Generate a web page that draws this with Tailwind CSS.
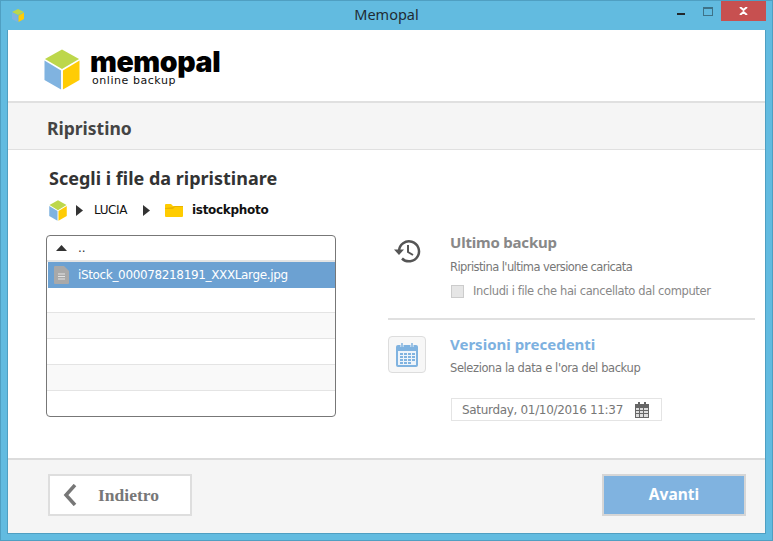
<!DOCTYPE html>
<html lang="en">
<head>
    <meta charset="UTF-8">
    <title>Memopal</title>
    <script src="https://cdn.jsdelivr.net/npm/@tailwindcss/browser@4"></script>
</head>
<body class="w-[773px] h-[541px] overflow-hidden font-['DejaVu_Sans',sans-serif]">

    <div class="w-[773px] h-[541px] flex flex-col bg-[#62bbe0] border border-[#4f9fc2] px-[6px] pb-[6px]">

        <!-- title bar -->
        <div class="h-[29px] shrink-0 flex items-center relative">
            <svg class="ml-[4px] mb-[1px]" width="14" height="15" viewBox="0 0 14 15">
                <path d="M7 1l6 3-6 3-6-3z" fill="#bdd74b"/>
                <path d="M1 4.500l5.500 3V14L1 11z" fill="#80b3e0"/>
                <path d="M13 4.500l-5.500 3V14l5.500-3z" fill="#ffcc05"/>
            </svg>
            <span class="flex-1 text-center text-[14.500px] text-[#1f2b33] font-['Noto_Sans',sans-serif] pr-[18px] mt-[-1px]">Memopal</span>
            <div class="absolute left-[670px] top-[12px] w-[8px] h-[2px] bg-[#22282c]"></div>
            <div class="absolute left-[696px] top-[6px] w-[10px] h-[9px] border border-[#3e7288] border-t-2"></div>
            <div class="absolute left-[714px] top-0 w-[45px] h-[20px] bg-[#c75050] flex items-center justify-center">
                <svg width="9" height="8" viewBox="0 0 9 8"><path d="M1 0l3.500 3L8 0M1 8l3.500-3L8 8" stroke="#fff" stroke-width="2" fill="none"/></svg>
            </div>
        </div>

        <!-- window body -->
        <div class="flex-1 flex flex-col bg-white border border-[#4f9fc2] border-t-0 min-h-0">

            <!-- logo -->
            <div class="h-[71px] shrink-0 flex items-center pl-[36px] border-b-2 border-[#e0e0e0] box-content">
                <svg class="mt-[7px]" width="36" height="41" viewBox="0 0 38 41" preserveAspectRatio="none">
                    <path d="M19 0.500L37 10 19 20 1 10z" fill="#bdd74b"/>
                    <path d="M0.500 11.500L18 21.500V40.500L0.500 31z" fill="#80b3e0"/>
                    <path d="M37.500 11.500L20 21.500V40.500L37.500 31z" fill="#ffcc05"/>
                </svg>
                <div class="ml-[10px] flex flex-col mt-[3px]">
                    <span class="text-[28.500px] leading-[26px] font-black tracking-[-0.4px] text-black font-['Inter',sans-serif]">memopal</span>
                    <span class="ml-[2px] text-[11px] leading-[11px] tracking-[0.55px] text-[#111]">online backup</span>
                </div>
            </div>

            <!-- section band -->
            <div class="h-[47px] shrink-0 flex items-center pl-[39px] pt-[5px] bg-[#f5f5f5] border-b border-[#e0e0e0] box-border">
                <span class="text-[17.500px] font-bold text-[#444] font-['Noto_Sans',sans-serif]">Ripristino</span>
            </div>

            <!-- main -->
            <div class="flex-1 flex min-h-0">
                <div class="w-[380px] shrink-0 pl-[38px] flex flex-col">
                    <h1 class="ml-[3px] mt-[17px] text-[18px] leading-[22px] font-bold text-[#333] font-['Noto_Sans',sans-serif]">Scegli i file da ripristinare</h1>
                    <div class="ml-[3px] mt-[11px] h-[20px] flex items-center text-[12px] text-[#111]">
                        <svg width="18" height="21" viewBox="0 0 38 41" preserveAspectRatio="none">
                            <path d="M19 0.500L37 10 19 20 1 10z" fill="#bdd74b"/>
                            <path d="M0.500 11.500L18 21.500V40.500L0.500 31z" fill="#80b3e0"/>
                            <path d="M37.500 11.500L20 21.500V40.500L37.500 31z" fill="#ffcc05"/>
                        </svg>
                        <svg class="ml-[9px]" width="7" height="11" viewBox="0 0 7 11"><path d="M0 0l7 5.500L0 11z" fill="#333"/></svg>
                        <span class="ml-[11px] tracking-[-0.4px]">LUCIA</span>
                        <svg class="ml-[16px]" width="7" height="11" viewBox="0 0 7 11"><path d="M0 0l7 5.500L0 11z" fill="#333"/></svg>
                        <svg class="ml-[15px]" width="18" height="14" viewBox="0 0 18 14"><path d="M0 2q0-1 1-1h5l2 2h9q1 0 1 1v9q0 1-1 1H1q-1 0-1-1z" fill="#fc0"/><path d="M0 5l8-1 2-1H18V4H10L8 6H0z" fill="#e9b400"/></svg>
                        <span class="ml-[9px] font-bold tracking-[-0.3px]">istockphoto</span>
                    </div>

                    <!-- file list -->
                    <div class="mt-[15px] w-[290px] h-[182px] border border-[#777] rounded-[4px] overflow-hidden flex flex-col text-[12px]">
                        <div class="h-[24px] flex items-center pl-[9px] border-b-2 border-[#e4e4e4] box-content">
                            <svg width="11" height="6" viewBox="0 0 11 6"><path d="M5.500 0L11 6H0z" fill="#333"/></svg>
                            <span class="ml-[11px] text-[#333]">..</span>
                        </div>
                        <div class="h-[25px] ml-px flex items-center pl-[6px] bg-[#6ca1d2] text-white border-b border-[#6ca1d2] box-content">
                            <svg width="15" height="18" viewBox="0 0 15 18"><path d="M0 1q0-1 1-1h9l5 5v12q0 1-1 1H1q-1 0-1-1z" fill="#a9a9a9"/><path d="M4 8h7M4 10.500h7M4 13h7" stroke="#e4e4e4"/></svg>
                            <span class="ml-[9px] tracking-[-0.35px]">iStock_000078218191_XXXLarge.jpg</span>
                        </div>
                        <div class="h-[24px] border-b border-[#e4e4e4] box-content"></div>
                        <div class="h-[25px] bg-[#f9f9f9] border-b border-[#e4e4e4] box-content"></div>
                        <div class="h-[25px] border-b border-[#e4e4e4] box-content"></div>
                        <div class="h-[25px] bg-[#f9f9f9] border-b border-[#e4e4e4] box-content"></div>
                        <div class="flex-1"></div>
                    </div>
                </div>

                <div class="w-[367px] shrink-0 flex flex-col">
                    <!-- last backup -->
                    <div class="h-[168px] border-b-2 border-[#e0e0e0] flex box-content">
                        <svg class="ml-[5px] mt-[88px]" width="28" height="26" viewBox="0 0 28 26" fill="none">
                            <path d="M6 13a10 10 0 1 1 3 7.500" stroke="#555" stroke-width="2.500"/>
                            <path d="M1 11.500h10L6 17z" fill="#555"/>
                            <path d="M15 7v7l5 3" stroke="#555" stroke-width="2"/>
                        </svg>
                        <div class="ml-[29px] flex flex-col">
                            <span class="mt-[83px] text-[15px] leading-[18px] font-bold tracking-[-0.2px] text-[#888] font-['Noto_Sans',sans-serif]">Ultimo backup</span>
                            <span class="mt-[9px] text-[11.500px] leading-[14px] tracking-[-0.58px] text-[#777]">Ripristina l'ultima versione caricata</span>
                            <label class="mt-[10px] flex items-center text-[11.500px] leading-[14px] tracking-[-0.37px] text-[#888]">
                                <span class="ml-px w-[13px] h-[13px] bg-[#e6e6e6] border border-[#ccc]"></span>
                                <span class="ml-[9px]">Includi i file che hai cancellato dal computer</span>
                            </label>
                        </div>
                    </div>

                    <!-- previous versions -->
                    <div class="flex">
                        <div class="mt-[16px] w-[38px] h-[37px] rounded-[4px] bg-[#f7f7f7] border border-[#ddd] flex items-center justify-center">
                            <svg width="22" height="24" viewBox="0 0 22 24">
                                <path d="M0 4q0-2 2-2h18q2 0 2 2v18q0 2-2 2H2q-2 0-2-2z" fill="#80b3e0"/>
                                <path d="M2 8h18v14H2z" fill="#eef4fa"/>
                                <path d="M4 10h3v2H4zM8 10h3v2H8zM12 10h3v2h-3zM16 10h3v2h-3zM4 13h3v2H4zM8 13h3v2H8zM12 13h3v2h-3zM16 13h3v2h-3zM4 16h3v2H4zM8 16h3v2H8zM12 16h3v2h-3zM16 16h3v2h-3zM4 19h3v2H4zM8 19h3v2H8zM12 19h3v2h-3z" fill="#80b3e0"/>
                                <path d="M6 0v4M16 0v4" stroke="#f7f7f7" stroke-width="3"/>
                                <path d="M6 0v4M16 0v4" stroke="#80b3e0" stroke-width="1.500"/>
                            </svg>
                        </div>
                        <div class="ml-[24px] flex flex-col">
                            <span class="mt-[15px] text-[15px] leading-[18px] font-bold text-[#7db1e0] font-['Noto_Sans',sans-serif]">Versioni precedenti</span>
                            <span class="mt-[8px] text-[11.500px] leading-[14px] tracking-[-0.4px] text-[#777]">Seleziona la data e l'ora del backup</span>
                            <div class="mt-[23px] ml-px w-[211px] h-[23px] border border-[#e4e4e4] flex items-center pl-[10px] text-[12px] text-[#777] tracking-[-0.32px]">
                                <span>Saturday, 01/10/2016 11:37</span>
                                <svg class="ml-[12px]" width="14" height="16" viewBox="0 0 14 16">
                                    <path d="M0 2h14v14H0z" fill="#666"/>
                                    <path d="M3 0h2v3H3zM9 0h2v3H9z" fill="#666"/>
                                    <path d="M1 6h3v2H1zM5 6h3v2H5zM9 6h4v2H9zM1 9h3v2H1zM5 9h3v2H5zM9 9h4v2H9zM1 12h3v3H1zM5 12h3v3H5zM9 12h4v3H9z" fill="#ddd"/>
                                </svg>
                            </div>
                        </div>
                    </div>
                </div>
            </div>

            <!-- footer -->
            <div class="h-[75px] shrink-0 flex items-start justify-between pl-[40px] pr-[19px] pt-[14px] bg-[#f5f5f5] border-t-2 border-[#dcdcdc] box-border">
                <button class="w-[144px] h-[42px] bg-white border-2 border-[#dedede] flex items-center text-[#777]">
                    <svg class="ml-[13px]" width="14" height="22" viewBox="0 0 14 22" fill="none"><path d="M12 1L3 11l9 10" stroke="#777" stroke-width="3.500"/></svg>
                    <span class="ml-[21px] text-[17.500px] font-bold font-['Liberation_Serif',serif]">Indietro</span>
                </button>
                <button class="w-[144px] h-[42px] bg-[#80b3e0] border-2 border-[#d6d6d6] text-white text-[15.500px] font-bold font-['Noto_Sans',sans-serif]">Avanti</button>
            </div>
        </div>
    </div>

</body>
</html>
